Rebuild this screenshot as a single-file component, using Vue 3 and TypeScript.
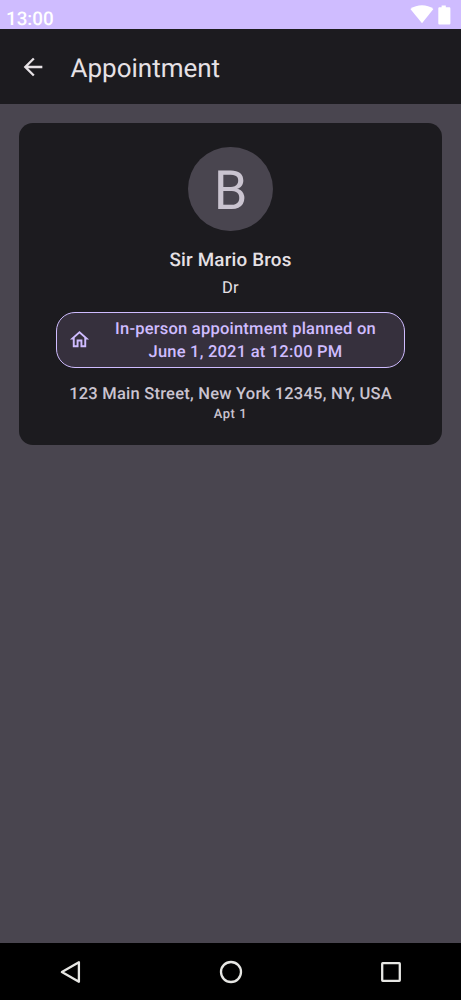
<script setup lang="ts">
interface Appointment {
  initial: string
  name: string
  title: string
  status: string[]
  address: string
  unit: string
}

const appointment: Appointment = {
  initial: 'B',
  name: 'Sir Mario Bros',
  title: 'Dr',
  status: ['In-person appointment planned on', 'June 1, 2021 at 12:00 PM'],
  address: '123 Main Street, New York 12345, NY, USA',
  unit: 'Apt 1',
}
</script>

<template>
  <div class="screen">
    <div class="status-bar">
      <span class="clock">13:00</span>
      <svg class="status-icons" width="44" height="29" viewBox="0 0 44 29" fill="#fff">
        <path d="M.4 9.100C7 4.100 17 4.100 23.400 9.100L12 23.200Z" />
        <path d="M31.600 5.400h4.200v1.800h3.300c.8 0 1.300.5 1.300 1.300v14.700c0 .8-.5 1.300-1.300 1.300h-9.500c-.8 0-1.300-.5-1.300-1.300V8.500c0-.8.5-1.300 1.300-1.300h2z" />
      </svg>
    </div>
    <header class="app-bar">
      <svg class="back" width="28" height="28" viewBox="0 0 24 24" fill="#e6e1e5">
        <path d="M20 11H7.830l5.590-5.590L12 4l-8 8 8 8 1.410-1.410L7.830 13H20v-2z" />
      </svg>
      <h1>Appointment</h1>
    </header>
    <main>
      <section class="card">
        <div class="avatar"><span>{{ appointment.initial }}</span></div>
        <div class="name">{{ appointment.name }}</div>
        <div class="role">{{ appointment.title }}</div>
        <div class="pill">
          <svg width="23" height="23" viewBox="0 0 24 24" fill="#cfbcff">
            <path d="M12 5.690l5 4.500V18h-2v-6H9v6H7v-7.810l5-4.500M12 3L2 12h3v8h6v-6h2v6h6v-8h3L12 3z" />
          </svg>
          <div class="status-text">
            <div v-for="line in appointment.status" :key="line">{{ line }}</div>
          </div>
        </div>
        <div class="address">{{ appointment.address }}</div>
        <div class="unit">{{ appointment.unit }}</div>
      </section>
    </main>
    <nav class="nav-bar">
      <svg width="28" height="28" viewBox="0 0 28 28"><path d="M22.900 4.200v19.600L5.900 14z" /></svg>
      <svg width="28" height="28" viewBox="0 0 28 28"><circle cx="14" cy="14" r="10" /></svg>
      <svg width="28" height="28" viewBox="0 0 28 28"><rect x="5.200" y="5.200" width="17.600" height="17.600" rx=".5" /></svg>
    </nav>
  </div>
</template>

<style>
body {
  margin: 0;
  background: #49454f;
}
</style>

<style scoped>
.screen {
  width: 461px;
  height: 1000px;
  display: flex;
  flex-direction: column;
  background: #49454f;
  color: #e6e1e5;
  font-family: Roboto, sans-serif;
  text-rendering: geometricPrecision;
  overflow: hidden;
}
.status-bar {
  height: 29px;
  flex: none;
  display: flex;
  justify-content: space-between;
  padding: 0 7px 0 6px;
  background: #cfbcff;
  color: #fff;
}
.clock {
  padding-top: 8px;
  font-size: 18.800px;
  font-weight: 500;
  line-height: 22px;
}
.app-bar {
  height: 75px;
  flex: none;
  box-sizing: border-box;
  display: flex;
  align-items: center;
  padding-left: 19px;
  background: #1c1b1f;
}
h1 {
  margin: 5px 0 0 23.500px;
  font-size: 26px;
  font-weight: 400;
  line-height: 33px;
}
main {
  flex: 1;
  padding: 19px;
}
.card {
  height: 322px;
  box-sizing: border-box;
  display: flex;
  flex-direction: column;
  align-items: center;
  padding-top: 23.500px;
  border-radius: 14px;
  background: #1c1b1f;
}
.avatar {
  width: 84.600px;
  height: 84.600px;
  flex: none;
  display: flex;
  align-items: center;
  justify-content: center;
  border-radius: 50%;
  background: #49454f;
  color: #cac4d0;
  font-size: 54px;
  line-height: 64px;
}
.avatar span {
  padding-top: 7px;
}
.name {
  margin-top: 14.900px;
  font-size: 18.800px;
  font-weight: 500;
  line-height: 28px;
  letter-spacing: 0.200px;
}
.role {
  margin-top: 3px;
  font-size: 16.500px;
  line-height: 23px;
  letter-spacing: 0.290px;
}
.pill {
  width: 349px;
  height: 56px;
  box-sizing: border-box;
  flex: none;
  display: flex;
  align-items: center;
  margin-top: 12px;
  padding: 0 17px 0 11px;
  border: 1.200px solid #cfbcff;
  border-radius: 19px;
  background: #36303d;
  color: #cfbcff;
}
.pill svg {
  margin-bottom: 1px;
}
.status-text {
  flex: 1;
  padding: 3px 0 0 13px;
  text-align: center;
  font-size: 16.500px;
  font-weight: 500;
  line-height: 23.500px;
  letter-spacing: 0.220px;
}
.address {
  margin-top: 15px;
  color: #cac4d0;
  font-size: 16.500px;
  font-weight: 500;
  line-height: 24px;
  letter-spacing: 0.230px;
}
.unit {
  color: #cac4d0;
  font-size: 12.950px;
  font-weight: 500;
  line-height: 16px;
  letter-spacing: 0.590px;
}
.nav-bar {
  height: 57px;
  flex: none;
  display: flex;
  align-items: center;
  justify-content: space-between;
  box-sizing: border-box;
  padding: 0 56px;
  background: #000;
}
.nav-bar svg {
  fill: none;
  stroke: #e6e6e3;
  stroke-width: 2.300;
  stroke-linejoin: round;
}
</style>
